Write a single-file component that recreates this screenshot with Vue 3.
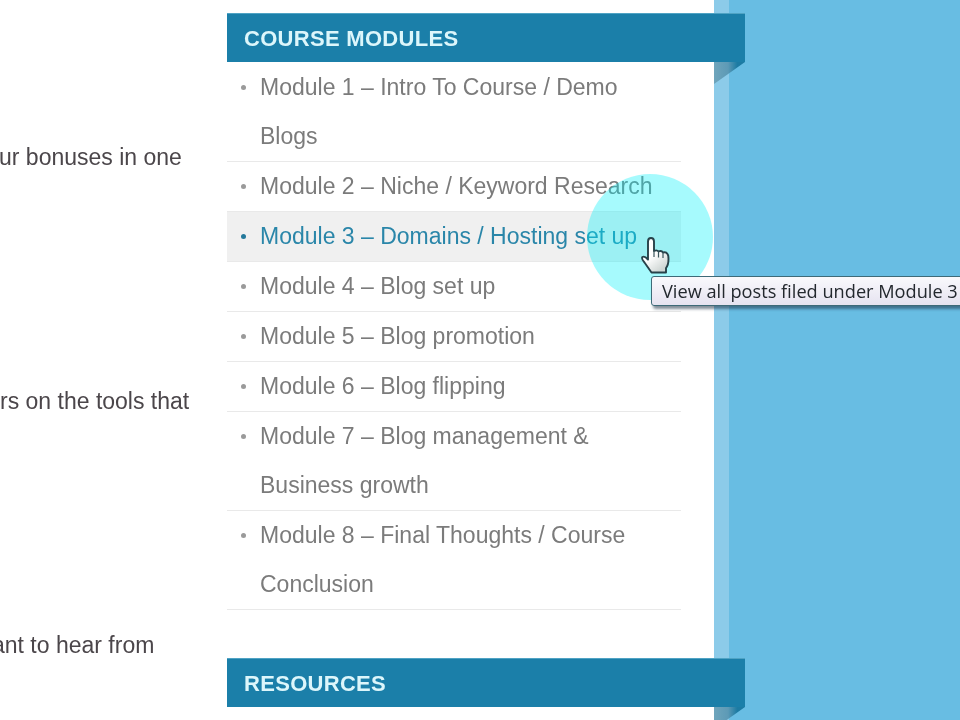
<script setup>
const modules = [
  { id: 1, title: 'Module 1 – Intro To Course / Demo Blogs' },
  { id: 2, title: 'Module 2 – Niche / Keyword Research' },
  { id: 3, title: 'Module 3 – Domains / Hosting set up', hover: true },
  { id: 4, title: 'Module 4 – Blog set up' },
  { id: 5, title: 'Module 5 – Blog promotion' },
  { id: 6, title: 'Module 6 – Blog flipping' },
  { id: 7, title: 'Module 7 – Blog management & Business growth' },
  { id: 8, title: 'Module 8 – Final Thoughts / Course Conclusion' },
];

const snippets = ['ur bonuses in one', 'rs on the tools that', 'ant to hear from'];
</script>

<template>
  <div class="page">
    <div class="content">
      <p v-for="line in snippets" :key="line" class="snippet">{{ line }}</p>
    </div>

    <aside class="sidebar">
      <h3 class="ribbon">COURSE MODULES</h3>
      <ul class="modules">
        <li v-for="m in modules" :key="m.id" :class="{ hover: m.hover }">{{ m.title }}</li>
      </ul>
      <h3 class="ribbon second">RESOURCES</h3>
    </aside>

    <div class="band"></div>
    <div class="backdrop"></div>

    <div class="spot"></div>
    <svg class="cursor" width="32" height="40" viewBox="640 236 32 40">
      <defs>
        <linearGradient id="palm" x1="0" y1="0" x2="0.6" y2="1">
          <stop offset="0.55" stop-color="#fff" />
          <stop offset="1" stop-color="#cfd6d4" />
        </linearGradient>
      </defs>
      <path
        d="M648 241.500q0-3.500 3-3.500t3 3.500v9.500q3-1.500 4.500.5q3-1.500 4.500 1q3-1 4.500 1.500q1 1 1 5q0 6-2.500 9v4.500h-14.500l-7-10q-3.500-4-2-5.500q2-1.500 5.500 2.500z"
        fill="url(#palm)"
        stroke="#27424a"
        stroke-width="1.900"
        stroke-linejoin="round"
      />
      <path d="M654 251v6M658.500 251.500v6M663 252.500v5.500" fill="none" stroke="#3c565c" stroke-width="1.200" />
    </svg>
    <div class="tooltip">View all posts filed under Module 3</div>
  </div>
</template>

<style>
html,
body {
  background: #fff;
  overflow: hidden;
}
</style>

<style scoped>
.page {
  position: relative;
  display: flex;
  width: 960px;
  height: 720px;
  overflow: hidden;
  background: #fff;
  font-family: "Liberation Sans", Arial, sans-serif;
  filter: blur(0.45px);
}

/* left column, cut by the frame of the video */
.content {
  flex: 0 0 227px;
  padding-top: 133px;
  overflow: hidden;
}

.snippet {
  margin: 0 0 195px;
  font-size: 23px;
  line-height: 49px;
  color: #4b464a;
  white-space: nowrap;
}

.snippet:first-child {
  margin-left: -1px;
}

.snippet:last-child {
  margin-left: -8px;
}

.sidebar {
  flex: 0 0 487px;
  min-width: 0;
  padding-top: 13px;
  background: #fff;
}

.ribbon {
  position: relative;
  z-index: 2;
  width: 518px;
  height: 49px;
  margin: 0;
  padding-left: 17px;
  box-sizing: border-box;
  border-top: 1px solid #4fa3c4;
  background: #1b7fa9;
  color: #dcf6fb;
  font-size: 22px;
  font-weight: bold;
  letter-spacing: 0.3px;
  line-height: 50px;
}

.ribbon::after {
  content: "";
  position: absolute;
  left: 487px;
  top: 48px;
  width: 31px;
  height: 22px;
  background: linear-gradient(90deg, #6fa5bc 0, #5d9ab6 45%, #1c7ba3 75%);
  clip-path: polygon(0 0, 100% 0, 0 100%);
}

.second {
  margin-top: 48px;
}

.modules {
  width: 454px;
  margin: 0;
  padding: 1px 0 0;
  list-style: none;
}

.modules li {
  position: relative;
  padding: 0 20px 0 33px;
  border-bottom: 1px solid #e9e9e9;
  color: #7b7b7b;
  font-size: 23px;
  line-height: 49px;
}

.modules li::before {
  content: "";
  position: absolute;
  left: 14px;
  top: 22px;
  width: 5px;
  height: 5px;
  border-radius: 50%;
  background: #9a9a9a;
}

.modules li.hover {
  background: #f0f0f0;
  color: #2a86a9;
}

.modules li.hover::before {
  background: #24799b;
}

.band {
  flex: 0 0 15px;
  background: #8ccbe9;
}

.backdrop {
  flex: 1;
  background: #68bde3;
}

.spot {
  position: absolute;
  left: 587px;
  top: 174px;
  width: 126px;
  height: 126px;
  border-radius: 50%;
  background: rgba(0, 240, 250, 0.35);
}

.cursor {
  position: absolute;
  left: 640px;
  top: 236px;
  z-index: 4;
}

.tooltip {
  position: absolute;
  left: 651px;
  top: 276px;
  z-index: 3;
  width: 340px;
  height: 30px;
  padding-left: 10px;
  box-sizing: border-box;
  border: 1px solid #3e6a78;
  border-radius: 3px;
  background: linear-gradient(#f9f9fc, #e6e3f0);
  box-shadow: 2px 3px 3px rgba(30, 50, 70, 0.55);
  color: #23282e;
  font-family: "Open Sans", sans-serif;
  font-size: 18.200px;
  line-height: 28px;
  white-space: nowrap;
}
</style>
